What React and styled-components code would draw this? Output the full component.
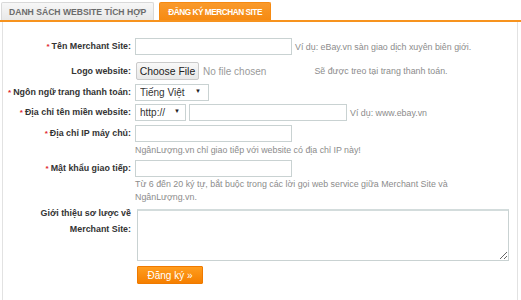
import React from "react";
import styled, { createGlobalStyle } from "styled-components";

const Global = createGlobalStyle`
  html, body { margin: 0; padding: 0; background: #fff; }
  body { font-family: "Liberation Sans", Arial, sans-serif; color: #333; }
`;

const Page = styled.div`
  width: 521px;
  height: 300px;
  overflow: hidden;
  background: #fff;
`;

const TabBar = styled.div`
  display: flex;
  align-items: flex-end;
  gap: 5px;
  height: 20px;
  padding-left: 1px;
  border-bottom: 2px solid #f7931e;
`;

const Tab = styled.div`
  height: 18px;
  box-sizing: border-box;
  padding: 0 ${(p) => (p.$active ? "8px" : "7px")};
  display: flex;
  align-items: center;
  font-size: ${(p) => (p.$active ? "8.3px" : "8.6px")};
  letter-spacing: ${(p) => (p.$active ? "-0.5px" : "0")};
  font-weight: bold;
  text-transform: uppercase;
  white-space: nowrap;
  color: ${(p) => (p.$active ? "#fff" : "#6b6b6b")};
  background: ${(p) =>
    p.$active ? "linear-gradient(#f99a2c, #f68a12)" : "linear-gradient(#f7f7f7, #e8e8e8)"};
  border: 1px solid ${(p) => (p.$active ? "#f68a12" : "#d9d9d9")};
  border-bottom: none;
  border-radius: 2px 2px 0 0;
`;

const Panel = styled.div`
  margin: 0 3px 0 2px;
  height: 278px;
  box-sizing: border-box;
  border-left: 1px solid #e2e2e2;
  border-right: 1px solid #e2e2e2;
  display: flex;
  flex-direction: column;
`;

const Row = styled.div`
  display: grid;
  grid-template-columns: 128px 1fr;
  column-gap: 4px;
  align-items: start;
  margin-top: ${(p) => p.$mt}px;
`;

const Label = styled.label`
  text-align: right;
  font-size: 8.9px;
  font-weight: bold;
  color: #333;
  white-space: nowrap;
  line-height: ${(p) => p.$lh || 17}px;
`;

const Star = styled.span`
  color: #e0242c;
  font-size: 8px;
  margin-right: 2px;
`;

const Field = styled.div`
  display: flex;
  flex-direction: column;
`;

const Line = styled.div`
  display: flex;
  align-items: center;
  gap: ${(p) => p.$gap ?? 3}px;
  height: ${(p) => p.$h || 17}px;
`;

const TextInput = styled.input`
  width: ${(p) => p.$w}px;
  height: 17px;
  box-sizing: border-box;
  border: 1px solid #c9d2d2;
  background: #fff;
  padding: 0 3px;
  font: 10px "Liberation Sans", Arial, sans-serif;
  outline: none;
`;

const Hint = styled.span`
  font-size: 8.85px;
  color: #8c8c8c;
  white-space: nowrap;
  margin-left: ${(p) => p.$ml || 0}px;
`;

const HintBlock = styled.div`
  font-size: 8.85px;
  color: #8c8c8c;
  white-space: nowrap;
  line-height: ${(p) => p.$lh}px;
  margin-top: ${(p) => p.$mt}px;
`;

const FileButton = styled.button`
  margin-left: 1px;
  width: 63px;
  height: 18px;
  box-sizing: border-box;
  border: 1px solid #cacaca;
  border-radius: 2px;
  background: linear-gradient(#f8f8f8, #e8e8e8);
  font: 10.4px "Liberation Sans", Arial, sans-serif;
  color: #222;
  padding: 0;
`;

const NoFile = styled.span`
  font-size: 10px;
  color: #9a9a9a;
  margin-left: 1px;
`;

const SelectWrap = styled.div`
  position: relative;
  width: ${(p) => p.$w}px;
  height: 17px;
  &::after {
    content: "▼";
    position: absolute;
    right: ${(p) => p.$ar}px;
    top: 4px;
    font-size: 6px;
    color: #222;
    pointer-events: none;
  }
`;

const Select = styled.select`
  appearance: none;
  -webkit-appearance: none;
  display: block;
  width: 100%;
  height: 17px;
  box-sizing: border-box;
  border: 1px solid #c9d2d2;
  border-radius: 0;
  background: #fff;
  padding: 0 0 0 4px;
  font: 10px "Liberation Sans", Arial, sans-serif;
  color: #333;
  outline: none;
`;

const TextArea = styled.textarea`
  margin: 4px 0 0 2px;
  width: 372px;
  height: 52px;
  box-sizing: border-box;
  border: 1px solid #c9d2d2;
  border-top: 2px solid #d3dcdc;
  resize: vertical;
  font: 10px "Liberation Sans", Arial, sans-serif;
  outline: none;
`;

const Submit = styled.button`
  margin-left: 2px;
  width: 66px;
  height: 18px;
  box-sizing: border-box;
  border: 1px solid #ef7a00;
  border-radius: 1px;
  background: linear-gradient(#ff9d1e, #f57f00);
  color: #fff;
  font: 10px "Liberation Sans", Arial, sans-serif;
  padding: 0;
`;

export default function App() {
  return (
    <Page>
      <Global />
      <TabBar>
        <Tab>Danh sách website tích hợp</Tab>
        <Tab $active>Đăng ký Merchan Site</Tab>
      </TabBar>
      <Panel>
        <Row $mt={16}>
          <Label><Star>*</Star>Tên Merchant Site:</Label>
          <Line>
            <TextInput $w={157} />
            <Hint>Ví dụ: eBay.vn sàn giao dịch xuyên biên giới.</Hint>
          </Line>
        </Row>
        <Row $mt={7}>
          <Label $lh={18}>Logo website:</Label>
          <Line $h={18} $gap={3}>
            <FileButton type="button">Choose File</FileButton>
            <NoFile>No file chosen</NoFile>
            <Hint $ml={45}>Sẽ được treo tại trang thanh toán.</Hint>
          </Line>
        </Row>
        <Row $mt={4}>
          <Label><Star>*</Star>Ngôn ngữ trang thanh toán:</Label>
          <Line>
            <SelectWrap $w={74} $ar={8}>
              <Select defaultValue="vi">
                <option value="vi">Tiếng Việt</option>
              </Select>
            </SelectWrap>
          </Line>
        </Row>
        <Row $mt={3}>
          <Label><Star>*</Star>Địa chỉ tên miền website:</Label>
          <Line>
            <SelectWrap $w={51} $ar={6}>
              <Select defaultValue="http">
                <option value="http">http://</option>
              </Select>
            </SelectWrap>
            <TextInput $w={158} />
            <Hint>Ví dụ: www.ebay.vn</Hint>
          </Line>
        </Row>
        <Row $mt={4}>
          <Label><Star>*</Star>Địa chỉ IP máy chủ:</Label>
          <Field>
            <TextInput $w={157} />
            <HintBlock $lh={12} $mt={2}>
              NgânLượng.vn chỉ giao tiếp với website có địa chỉ IP này!
            </HintBlock>
          </Field>
        </Row>
        <Row $mt={4}>
          <Label><Star>*</Star>Mật khẩu giao tiếp:</Label>
          <Field>
            <TextInput $w={157} type="password" />
            <HintBlock $lh={13} $mt={1}>
              Từ 6 đến 20 ký tự, bắt buộc trong các lời gọi web service giữa Merchant Site và
              <br />
              NgânLượng.vn.
            </HintBlock>
          </Field>
        </Row>
        <Row $mt={1}>
          <Label $lh={16}>
            Giới thiệu sơ lược về
            <br />
            Merchant Site:
          </Label>
          <Field>
            <TextArea />
          </Field>
        </Row>
        <Row $mt={5}>
          <span />
          <Field>
            <Submit type="button">Đăng ký »</Submit>
          </Field>
        </Row>
      </Panel>
    </Page>
  );
}
